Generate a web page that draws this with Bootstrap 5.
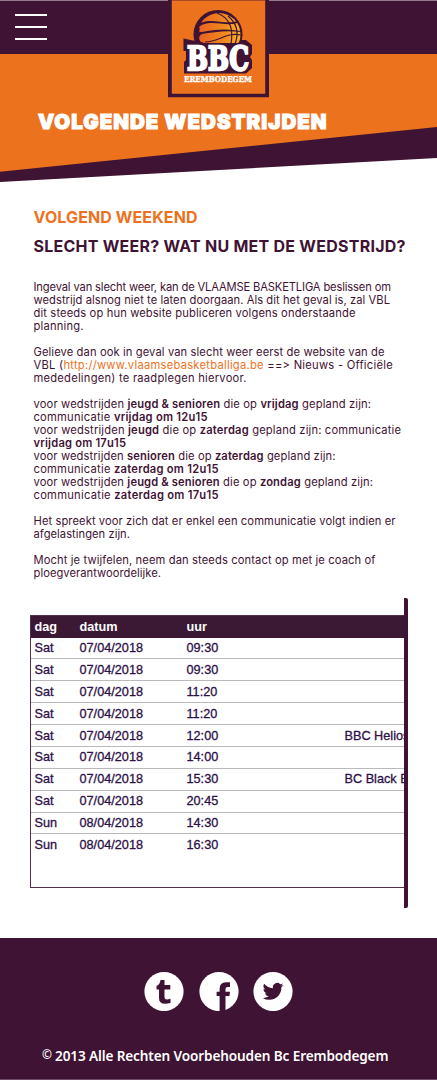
<!DOCTYPE html>
<html lang="nl">
<head>
<meta charset="utf-8">
<meta name="viewport" content="width=device-width, initial-scale=1">
<title>BBC Erembodegem - Volgende wedstrijden</title>
<link href="https://cdn.jsdelivr.net/npm/bootstrap@5.3.0/dist/css/bootstrap.min.css" rel="stylesheet">
<style>
:root { --plum: #3f1334; --orange: #ec721e; }
body { width: 437px; height: 1080px; overflow: hidden; color: var(--plum); font-family: Inter, "Open Sans", sans-serif; }
.hero { height: 183px; }
.hero-bg { z-index: -1; }
.topbar { height: 54px; background: var(--plum); border-top: 1px solid #957a8e; padding: 13px 15px 0; }
.burger { width: 32px; height: 26px; }
.burger i { height: 2px; background: #fff; }
.club-logo { left: 168px; top: 0; width: 101px; height: 98px; }
.page-title { margin: 56px 0 0 38px; font: 900 20.5px/24px Inter, sans-serif; color: #fff; -webkit-text-stroke: 1px #fff; white-space: nowrap; }
.intro { padding: 20px 0 0 33.5px; }
.kop { font-family: Inter, sans-serif; font-weight: 700; font-size: 16px; line-height: 29px; margin: 0; white-space: nowrap; }
.kop-oranje, .intro a { color: var(--orange); }
.tekst { margin-top: 20px; font-size: 11.2px; line-height: 13px; }
.tekst p { margin-bottom: 13px; }
.tekst strong { font-weight: 600; }
.regel { display: block; white-space: nowrap; }
.regel > span { display: inline-block; }
.schema { margin: 18px 0 0 30px; width: 378px; height: 310px; border-right: 4px solid var(--plum); border-radius: 0 2px 2px 0; padding-top: 17px; }
.games { height: 273px; border: 1px solid #55304c; border-right: 0; overflow: hidden; font: 12.7px/21px "Liberation Sans", Arial, sans-serif; color: #2c1047; -webkit-text-stroke: .3px; }
.game { display: grid; grid-template-columns: 45px 107px 158px 100px; height: 21.88px; padding: .6px 0 0 3.5px; border-bottom: 1px solid #b9b9b9; white-space: nowrap; }
.game:last-child { border-bottom: 0; }
.game-head { height: 21.5px; background: #3b1834; color: #fff; font-weight: 700; border: 0; -webkit-text-stroke: 0; }
.voet { margin-top: 30px; height: 142px; background: var(--plum); color: #fff; padding-top: 33px; border-bottom: 1px solid #6f4b68; }
.voet svg { width: 40px; height: 40px; }
.social { gap: 14.3px; }
.copyright { margin: 34px 0 0 42px; font: 600 13.6px/22px "Noto Sans", sans-serif; white-space: nowrap; }
.copyright sup { font-size: 12px; top: -2px; line-height: 1; vertical-align: baseline; width: 13px; display: inline-block; }
</style>
</head>
<body class="bg-white m-0">
<header class="hero position-relative">
  <svg class="hero-bg position-absolute top-0 start-0" width="437" height="183" viewBox="0 0 437 183">
    <path fill="#3f1334" d="M0 54H437V158L0 182Z"/>
    <path fill="#ec721e" d="M0 54H437V127L0 171.7Z"/>
  </svg>
  <nav class="topbar">
    <div class="burger d-flex flex-column justify-content-between" role="button" aria-label="Menu"><i></i><i></i><i></i></div>
  </nav>
  <svg class="club-logo position-absolute" viewBox="168 0 101 98">
    <path fill="#3f1334" d="M168 0H269V97.3H168Z"/>
    <path fill="#ec721e" d="M171.8 0H265.2V93.8H171.8Z"/>
    <path stroke="#a84c25" d="M172 .5H265"/>
    <circle cx="218" cy="34.5" r="24.5" fill="#3f1334"/>
    <defs><linearGradient id="bal"><stop stop-color="#e9601f"/><stop offset=".65" stop-color="#f18a20"/><stop offset="1" stop-color="#f8b31f"/></linearGradient></defs>
    <circle cx="219" cy="34.5" r="21.5" fill="url(#bal)"/>
    <path d="M197 36C195 26 199 18 206 15C202 19 200 22 202 22.500C213 18 226 25 238 21L237.500 23C225 26.500 215 20.500 203 24.500C199 26 198.500 28 200 29C198.500 31 199 32.500 202 32C215 29 228 28.500 241 31V32C227 30 213 32 202 34C197.500 36 199 42 203 43H197Z" fill="#3f1334"/>
    <path d="M217 13C232 19 233 31 231 44M228 16C239 25 238 36 235 44M241 35C225 32 220 42 205 42" fill="none" stroke="#3f1334" stroke-width="1.200"/>
    <path d="M183.500 38.500L205 43H238L241 40H246L252 45V54L250 57L252 60V68L246 73.500H184V62L186 60V51H183.500Z" fill="#3f1334"/>
    <g font-family="DejaVu Serif, serif" font-weight="700" fill="#fff" stroke="#fff" text-rendering="geometricPrecision">
      <text x="187" y="69.700" textLength="62" lengthAdjust="spacingAndGlyphs" font-size="33" stroke-width="2.400">BBC</text>
      <text x="184" y="82.300" textLength="68" lengthAdjust="spacingAndGlyphs" font-size="8" stroke-width=".35">EREMBODEGEM</text>
    </g>
  </svg>
  <h1 class="page-title"><span data-fit="288.500">VOLGENDE WEDSTRIJDEN</span></h1>
</header>
<main>
  <section class="intro">
    <h2 class="kop kop-oranje"><span data-fit="164">VOLGEND WEEKEND</span></h2>
    <h2 class="kop"><span data-fit="372">SLECHT WEER? WAT NU MET DE WEDSTRIJD?</span></h2>
    <div class="tekst">
      <p>
        <span class="regel"><span data-fit="357.500">Ingeval van slecht weer, kan de VLAAMSE BASKETLIGA beslissen om</span></span>
        <span class="regel"><span data-fit="356.500">wedstrijd alsnog niet te laten doorgaan. Als dit het geval is, zal VBL</span></span>
        <span class="regel"><span data-fit="322">dit steeds op hun website publiceren volgens onderstaande</span></span>
        <span class="regel"><span data-fit="50">planning.</span></span>
      </p>
      <p>
        <span class="regel"><span data-fit="351">Gelieve dan ook in geval van slecht weer eerst de website van de</span></span>
        <span class="regel"><span data-fit="352">VBL (<a class="text-decoration-none" href="#">http://www.vlaamsebasketballiga.be</a> ==&gt; Nieuws - Officiële</span></span>
        <span class="regel"><span data-fit="213">mededelingen) te raadplegen hiervoor.</span></span>
      </p>
      <p>
        <span class="regel"><span data-fit="337.500">voor wedstrijden <strong>jeugd &amp; senioren</strong> die op <strong>vrijdag</strong> gepland zijn:</span></span>
        <span class="regel"><span data-fit="174">communicatie <strong>vrijdag om 12u15</strong></span></span>
        <span class="regel"><span data-fit="367.500">voor wedstrijden <strong>jeugd</strong> die op <strong>zaterdag</strong> gepland zijn: communicatie</span></span>
        <span class="regel"><span data-fit="92.500"><strong>vrijdag om 17u15</strong></span></span>
        <span class="regel"><span data-fit="302">voor wedstrijden <strong>senioren</strong> die op <strong>zaterdag</strong> gepland zijn:</span></span>
        <span class="regel"><span data-fit="185">communicatie <strong>zaterdag om 12u15</strong></span></span>
        <span class="regel"><span data-fit="339.500">voor wedstrijden <strong>jeugd &amp; senioren</strong> die op <strong>zondag</strong> gepland zijn:</span></span>
        <span class="regel"><span data-fit="185">communicatie <strong>zaterdag om 17u15</strong></span></span>
      </p>
      <p>
        <span class="regel"><span data-fit="362">Het spreekt voor zich dat er enkel een communicatie volgt indien er</span></span>
        <span class="regel"><span data-fit="96.500">afgelastingen zijn.</span></span>
      </p>
      <p class="mb-0">
        <span class="regel"><span data-fit="342">Mocht je twijfelen, neem dan steeds contact op met je coach of</span></span>
        <span class="regel"><span data-fit="127.500">ploegverantwoordelijke.</span></span>
      </p>
    </div>
  </section>
  <section class="schema">
    <div class="games">
      <div class="game game-head"><span>dag</span><span>datum</span><span>uur</span></div>
      <div class="game"><span>Sat</span><span>07/04/2018</span><span>09:30</span></div>
      <div class="game"><span>Sat</span><span>07/04/2018</span><span>09:30</span></div>
      <div class="game"><span>Sat</span><span>07/04/2018</span><span>11:20</span></div>
      <div class="game"><span>Sat</span><span>07/04/2018</span><span>11:20</span></div>
      <div class="game"><span>Sat</span><span>07/04/2018</span><span>12:00</span><span>BBC Helios</span></div>
      <div class="game"><span>Sat</span><span>07/04/2018</span><span>14:00</span></div>
      <div class="game"><span>Sat</span><span>07/04/2018</span><span>15:30</span><span>BC Black B</span></div>
      <div class="game"><span>Sat</span><span>07/04/2018</span><span>20:45</span></div>
      <div class="game"><span>Sun</span><span>08/04/2018</span><span>14:30</span></div>
      <div class="game"><span>Sun</span><span>08/04/2018</span><span>16:30</span></div>
    </div>
  </section>
</main>
<footer class="voet">
  <div class="social d-flex justify-content-center">
    <svg viewBox="0 0 40 40"><circle cx="20" cy="20.500" r="19.600" fill="#fff"/><path fill="#3f1334" d="M16.500 9H20.500V14H26.300V18.500H20.500V26Q20.500 28.500 23 28.500L26.500 27.800V32Q15 35 15 27V18.500H12.500V15Q16 13.500 16.500 9Z"/></svg>
    <svg viewBox="0 0 40 40"><circle cx="20" cy="20.500" r="19.600" fill="#fff"/><path fill="#3f1334" d="M20.600 40.500V25H17.600V20.800H20.600V18Q20.600 11.300 27 11.300H31V15.900H28.500Q26.500 15.900 26.500 18V20.800H31L30.500 25H26.500V40.500Z"/></svg>
    <svg viewBox="0 0 40 40"><circle cx="20" cy="20.500" r="19.600" fill="#fff"/><path fill="#3f1334" transform="translate(9.700 9.300) scale(1.300)" d="M5.026 15c6.038 0 9.341-5.003 9.341-9.334q.002-.211-.006-.422A6.700 6.700 0 0 0 16 3.542a6.700 6.700 0 0 1-1.889.518 3.300 3.300 0 0 0 1.447-1.817 6.500 6.500 0 0 1-2.087.793A3.286 3.286 0 0 0 7.875 6.030a9.320 9.320 0 0 1-6.767-3.429 3.290 3.290 0 0 0 1.018 4.382A3.300 3.300 0 0 1 .640 6.575v.045a3.290 3.290 0 0 0 2.632 3.218 3.200 3.200 0 0 1-.865.115 3 3 0 0 1-.614-.057 3.280 3.280 0 0 0 3.067 2.277A6.600 6.600 0 0 1 .780 13.580a6 6 0 0 1-.780-.045A9.340 9.340 0 0 0 5.026 15"/></svg>
  </div>
  <p class="copyright"><sup>©</sup><span data-fit="333.500">2013 Alle Rechten Voorbehouden Bc Erembodegem</span></p>
</footer>
<script src="https://cdn.jsdelivr.net/npm/bootstrap@5.3.0/dist/js/bootstrap.bundle.min.js"></script>
<script>
document.querySelectorAll('[data-fit]').forEach(function (el) {
  var w = el.getBoundingClientRect().width;
  el.style.letterSpacing = (el.dataset.fit - w) / (el.textContent.length - 1) + 'px';
});
</script>
</body>
</html>
